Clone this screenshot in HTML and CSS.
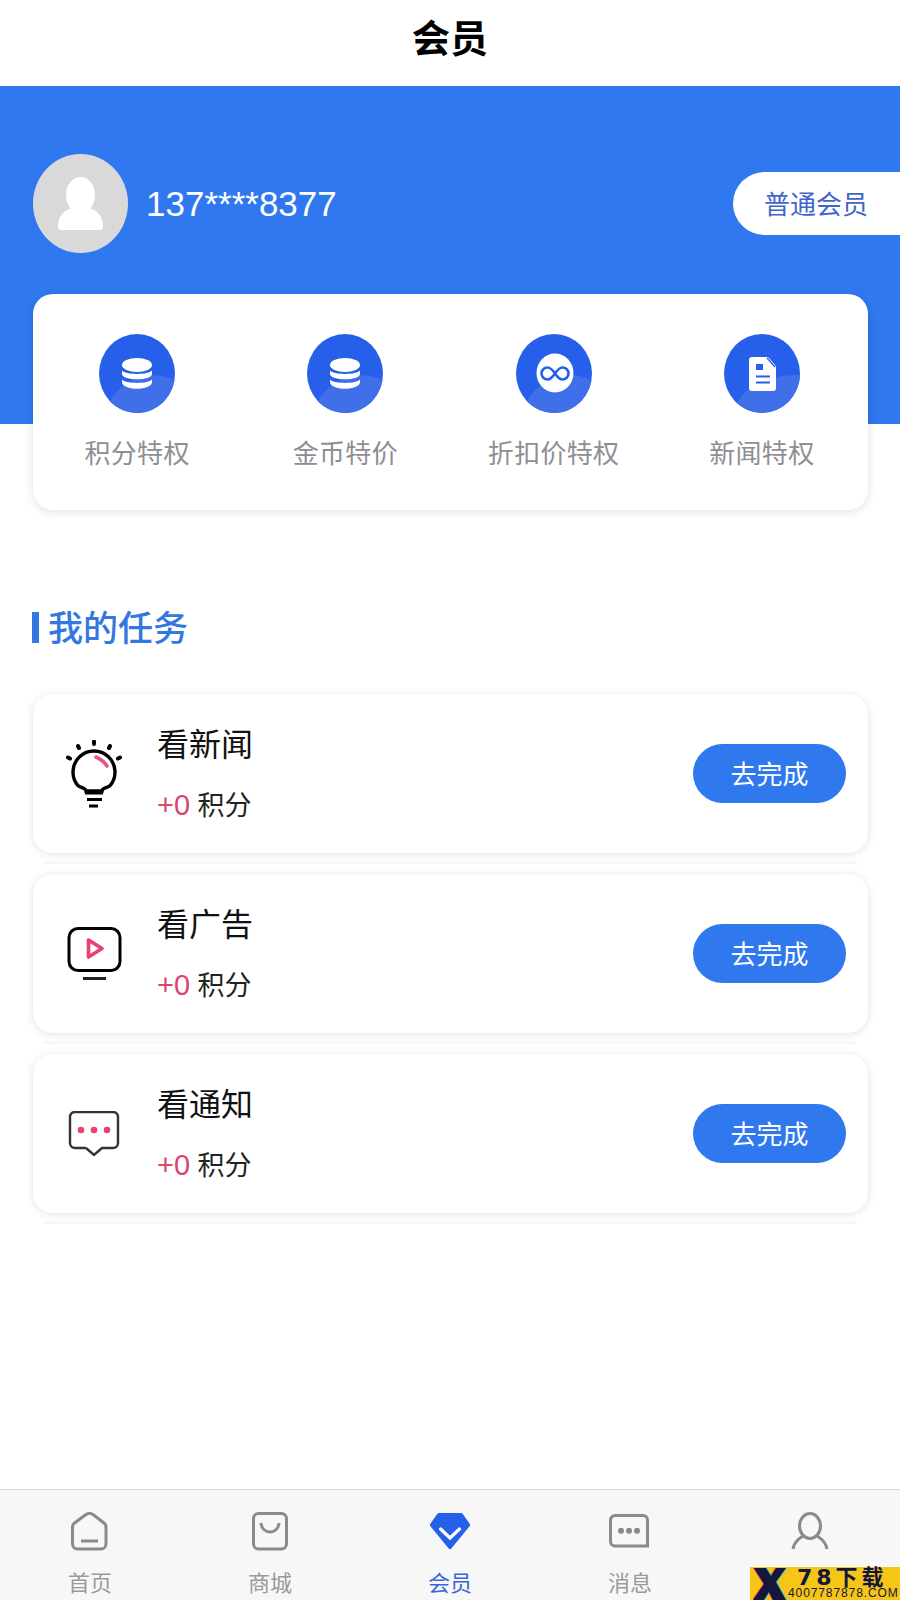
FILE: index.html
```html
<!DOCTYPE html>
<html>
<head>
  <meta charset="utf-8">
  <title>会员</title>
  <link rel="stylesheet" href="styles.css">
</head>
<body>
  <div class="page">
    <header class="topbar">会员</header>

    <section class="hero">
      <div class="avatar">
        <svg width="95" height="99" viewBox="0 0 95 99">
          <ellipse cx="47.5" cy="41" rx="14.5" ry="18" fill="#fff"/>
          <path d="M25 72 C25 60 34 53 47.5 53 C61 53 70 60 70 72 Q70 76 67 76 H28 Q25 76 25 72 Z" fill="#fff"/>
        </svg>
      </div>
      <div class="phone">137****8377</div>
      <div class="level">普通会员</div>
    </section>

    <section class="perks">
      <div class="perk">
        <svg width="76" height="79" viewBox="0 0 76 79">
          <ellipse cx="38" cy="39.5" rx="38" ry="39.5" fill="#2660ea"/>
          <path d="M11 67.3 C20 50 45 33 75.5 45.9 A38 39.5 0 0 1 11 67.3 Z" fill="#3f6fe9"/>
          <ellipse cx="38" cy="31" rx="15" ry="7" fill="#fff"/>
          <path d="M23 36.5 C26 41 50 41 53 36.5 V40 C53 47 23 47 23 40 Z" fill="#fff"/>
          <path d="M23 45.5 C26 50 50 50 53 45.5 V48 C53 57 23 57 23 48 Z" fill="#fff"/>
        </svg>
        <span>积分特权</span>
      </div>
      <div class="perk">
        <svg width="76" height="79" viewBox="0 0 76 79">
          <ellipse cx="38" cy="39.5" rx="38" ry="39.5" fill="#2660ea"/>
          <path d="M11 67.3 C20 50 45 33 75.5 45.9 A38 39.5 0 0 1 11 67.3 Z" fill="#3f6fe9"/>
          <ellipse cx="38" cy="31" rx="15" ry="7" fill="#fff"/>
          <path d="M23 36.5 C26 41 50 41 53 36.5 V40 C53 47 23 47 23 40 Z" fill="#fff"/>
          <path d="M23 45.5 C26 50 50 50 53 45.5 V48 C53 57 23 57 23 48 Z" fill="#fff"/>
        </svg>
        <span>金币特价</span>
      </div>
      <div class="perk">
        <svg width="76" height="79" viewBox="0 0 76 79">
          <ellipse cx="38" cy="39.5" rx="38" ry="39.5" fill="#2660ea"/>
          <path d="M11 67.3 C20 50 45 33 75.5 45.9 A38 39.5 0 0 1 11 67.3 Z" fill="#3f6fe9"/>
          <ellipse cx="39" cy="39" rx="18.5" ry="19.5" fill="#fff"/>
          <path d="M39 39.5 C36 35 33.5 33.5 31.5 33.5 a6 6 0 0 0 0 12 C33.5 45.5 36 44 39 39.5 C42 35 44.5 33.5 46.5 33.5 a6 6 0 0 1 0 12 C44.5 45.5 42 44 39 39.5 Z" fill="none" stroke="#2660ea" stroke-width="2.6"/>
        </svg>
        <span>折扣价特权</span>
      </div>
      <div class="perk">
        <svg width="76" height="79" viewBox="0 0 76 79">
          <ellipse cx="38" cy="39.5" rx="38" ry="39.5" fill="#2660ea"/>
          <path d="M13 69 C20 54 45 40 76 41 A38 39.5 0 0 1 13 69 Z" fill="#3f6fe9"/>
          <path d="M28 23 H42 Q44 23 45 24 L51 31 Q52 32 52 34 V54 Q52 57 49 57 H28 Q25 57 25 54 V26 Q25 23 28 23 Z" fill="#fff"/>
          <path d="M43 24 L51 33" stroke="#2660ea" stroke-width="1.3"/>
          <rect x="32" y="30" width="7" height="6" fill="#2660ea"/>
          <path d="M32 42.5 H46 M32 48.5 H46" stroke="#2660ea" stroke-width="2"/>
        </svg>
        <span>新闻特权</span>
      </div>
    </section>

    <h2 class="section-title"><i></i>我的任务</h2>

    <section class="tasks">
      <div class="task-row">
        <div class="task">
          <svg class="task-icon" width="60" height="68" viewBox="0 0 60 68">
            <path d="M22 51 C22 48 18 48.5 14 45.6 A21 21 0 1 1 46 45.6 C42 48.5 38 48 38 51 Z" fill="none" stroke="#000" stroke-width="3.4"/>
            <path d="M30 1.5 V4 M14 6 L15 8 M46 6 L45 8 M4 17.5 L6 18.5 M56 17.5 L54 18.5" stroke="#000" stroke-width="4" stroke-linecap="round"/>
            <path d="M21 53 H39 M23 59.5 H38 M25 66 H34" stroke="#000" stroke-width="3"/>
            <path d="M32 17 Q39 20 43 26" fill="none" stroke="#e8557f" stroke-width="3.6" stroke-linecap="round"/>
          </svg>
          <div class="task-text">
            <div class="task-name">看新闻</div>
            <div class="task-points"><em>+0</em> 积分</div>
          </div>
          <button class="task-btn">去完成</button>
        </div>
      </div>
      <div class="task-row">
        <div class="task">
          <svg class="task-icon" width="60" height="54" viewBox="0 0 60 54">
            <rect x="5" y="1.5" width="51" height="42" rx="9" fill="none" stroke="#000" stroke-width="3"/>
            <path d="M24.5 13 L38 21.5 L24.5 30 Z" fill="none" stroke="#e8436f" stroke-width="3.6" stroke-linejoin="round"/>
            <path d="M19 51.5 H42" stroke="#222" stroke-width="3"/>
          </svg>
          <div class="task-text">
            <div class="task-name">看广告</div>
            <div class="task-points"><em>+0</em> 积分</div>
          </div>
          <button class="task-btn">去完成</button>
        </div>
      </div>
      <div class="task-row">
        <div class="task">
          <svg class="task-icon" width="60" height="45" viewBox="0 0 60 45">
            <path d="M22 37 H11 a5 5 0 0 1 -5 -5 V6 a5 5 0 0 1 5 -5 H49 a5 5 0 0 1 5 5 V32 a5 5 0 0 1 -5 5 H38 L30 44 L22 37" fill="none" stroke="#333" stroke-width="2.4"/>
            <circle cx="17" cy="19" r="3.3" fill="#e8436f"/>
            <circle cx="30" cy="19" r="3.3" fill="#e8436f"/>
            <circle cx="43" cy="19" r="3.3" fill="#e8436f"/>
          </svg>
          <div class="task-text">
            <div class="task-name">看通知</div>
            <div class="task-points"><em>+0</em> 积分</div>
          </div>
          <button class="task-btn">去完成</button>
        </div>
      </div>
    </section>

    <nav class="tabbar">
      <div class="tab">
        <svg width="44" height="44" viewBox="0 0 44 44" fill="none" stroke="#8a8a8a" stroke-width="3">
          <path d="M4.5 18 Q4.5 15.5 6.5 14 L18 5.5 Q21.5 3 25 5.5 L36 14 Q38 15.5 38 18 V35 a5 5 0 0 1 -5 5 H9.5 a5 5 0 0 1 -5 -5 Z"/>
          <path d="M13 32 H30"/>
        </svg>
        <span>首页</span>
      </div>
      <div class="tab">
        <svg width="44" height="44" viewBox="0 0 44 44" fill="none" stroke="#8a8a8a" stroke-width="3">
          <rect x="5.5" y="4.5" width="33" height="35.5" rx="5"/>
          <path d="M13 14 C14 26 30 26 31 14"/>
        </svg>
        <span>商城</span>
      </div>
      <div class="tab active">
        <svg width="44" height="44" viewBox="0 0 44 44">
          <path d="M11 6 H33 L40 16 L22 38 L4 16 Z" fill="#2660ea" stroke="#2660ea" stroke-width="4" stroke-linejoin="round"/>
          <path d="M12.5 20 L22 29 L31.5 20" fill="none" stroke="#fff" stroke-width="3.2" stroke-linecap="round"/>
        </svg>
        <span>会员</span>
      </div>
      <div class="tab">
        <svg width="44" height="44" viewBox="0 0 44 44" fill="none" stroke="#8a8a8a" stroke-width="3">
          <path d="M7 6.5 H35 a4.5 4.5 0 0 1 4.5 4.5 V37 H7 a4.5 4.5 0 0 1 -4.5 -4.5 V11 A4.5 4.5 0 0 1 7 6.5 Z"/>
          <circle cx="13" cy="21.7" r="3" fill="#8a8a8a" stroke="none"/>
          <circle cx="21" cy="21.7" r="3" fill="#8a8a8a" stroke="none"/>
          <circle cx="29" cy="21.7" r="3" fill="#8a8a8a" stroke="none"/>
        </svg>
        <span>消息</span>
      </div>
      <div class="tab">
        <svg width="44" height="44" viewBox="0 0 44 44" fill="none" stroke="#8a8a8a" stroke-width="3">
          <ellipse cx="22" cy="17" rx="10.5" ry="12.5"/>
          <path d="M5 40 C6 34 10 30 15 27 M39 40 C38 34 34 30 29 27"/>
        </svg>
      </div>
    </nav>

    <div class="watermark">
      <svg class="wm-logo" width="34" height="33" viewBox="0 0 34 33">
        <path d="M1 1 H13 L18 9 L23 1 H33 L23 15 L33 33 H20 L16 25 L11 33 H0 L11 17 Z" fill="#ff3b4e" transform="translate(-1 0)"/>
        <path d="M1 1 H13 L18 9 L23 1 H33 L23 15 L33 33 H20 L16 25 L11 33 H0 L11 17 Z" fill="#2ad0d8" transform="translate(1 0)"/>
        <path d="M1 1 H13 L18 9 L23 1 H33 L23 15 L33 33 H20 L16 25 L11 33 H0 L11 17 Z" fill="#14163c"/>
      </svg>
      <div class="wm-text">
        <div class="wm-big">78下载</div>
        <div class="wm-small">4007787878.COM</div>
      </div>
    </div>
  </div>
</body>
</html>
```

FILE: styles.css
```css
body {
  margin: 0;
  background: #fff;
  font-family: "Liberation Sans", "Noto Sans CJK SC", sans-serif;
}
.page {
  position: relative;
  display: flex;
  flex-direction: column;
  width: 900px;
  height: 1600px;
  overflow: hidden;
}

.topbar {
  display: flex;
  align-items: center;
  justify-content: center;
  height: 86px;
  padding-bottom: 16px;
  box-sizing: border-box;
  font-size: 38px;
  font-weight: 700;
  color: #000;
}

.hero {
  display: flex;
  align-items: center;
  height: 338px;
  padding: 68px 0 171px 33px;
  box-sizing: border-box;
  background: #3078ef;
}
.avatar {
  display: flex;
  width: 95px;
  height: 99px;
  border-radius: 50%;
  background: #d9d9d9;
  overflow: hidden;
}
.phone {
  margin-left: 18px;
  font-size: 35px;
  color: #fff;
}
.level {
  display: flex;
  align-items: center;
  height: 63px;
  margin-left: auto;
  padding: 0 32px 2px 31px;
  box-sizing: border-box;
  border-radius: 32px 0 0 32px;
  background: #fff;
  font-size: 26px;
  color: #3f66c8;
}

.perks {
  position: relative;
  display: grid;
  grid-template-columns: repeat(4, 1fr);
  height: 216px;
  margin: -130px 32px 0 33px;
  padding: 40px 2px 0 0;
  box-sizing: border-box;
  border-radius: 20px;
  background: #fff;
  box-shadow: 0 2px 10px rgba(0, 0, 0, 0.12);
}
.perk {
  display: flex;
  flex-direction: column;
  align-items: center;
  gap: 23px;
  font-size: 26px;
  line-height: 36px;
  letter-spacing: 0.3px;
  color: #8e8e93;
}

.section-title {
  display: flex;
  align-items: center;
  gap: 9px;
  height: 44px;
  margin: 93px 0 47px 32px;
  font-size: 35px;
  font-weight: 500;
  color: #3278e0;
}
.section-title i {
  width: 7px;
  height: 31px;
  margin-top: 4px;
  background: #3278e0;
}

.tasks {
  flex: 1;
  margin: 0 32px 0 33px;
}
.task-row::after {
  content: "";
  display: block;
  height: 3px;
  margin: 8px 12px 10px 11px;
  background: #f7f7f7;
}
.task {
  display: flex;
  align-items: center;
  height: 159px;
  padding: 0 22px 0 31px;
  box-sizing: border-box;
  border-radius: 20px;
  background: #fff;
  box-shadow: 0 1px 9px rgba(0, 0, 0, 0.12);
}
.task-text {
  align-self: flex-start;
  margin: 31px 0 0 33px;
}
.task-name {
  font-size: 32px;
  line-height: 40px;
  color: #111;
}
.task-points {
  margin-top: 20px;
  font-size: 27px;
  line-height: 40px;
  color: #222;
}
.task-points em {
  font-style: normal;
  font-size: 29px;
  color: #d8466a;
}
.task-btn {
  width: 153px;
  height: 59px;
  margin-left: auto;
  padding: 0 0 2px;
  border: none;
  border-radius: 30px;
  background: #3078ed;
  color: #fff;
  font-family: inherit;
  font-size: 26px;
}

.tabbar {
  display: grid;
  grid-template-columns: repeat(5, 1fr);
  height: 111px;
  padding-top: 19px;
  box-sizing: border-box;
  border-top: 1px solid #dcdcdc;
  background: #f7f7f7;
}
.tab {
  display: flex;
  flex-direction: column;
  align-items: center;
  gap: 16px;
  font-size: 22px;
  line-height: 30px;
  color: #9a9a9a;
}
.tab.active {
  color: #3a66d8;
}

.watermark {
  position: absolute;
  right: 0;
  bottom: 0;
  display: flex;
  gap: 1px;
  width: 150px;
  height: 33px;
  padding-left: 3px;
  box-sizing: border-box;
  background: #f5c518;
}
.wm-logo {
  flex: none;
}
.wm-text {
  display: flex;
  flex-direction: column;
  color: #14163c;
}
.wm-big {
  height: 21px;
  margin-left: 9px;
  font-family: "DejaVu Sans", "Noto Sans CJK SC", sans-serif;
  font-size: 22px;
  font-weight: 700;
  line-height: 21px;
  letter-spacing: 4px;
  white-space: nowrap;
}
.wm-small {
  font-size: 12px;
  line-height: 11px;
  letter-spacing: 0.9px;
  white-space: nowrap;
}
```
